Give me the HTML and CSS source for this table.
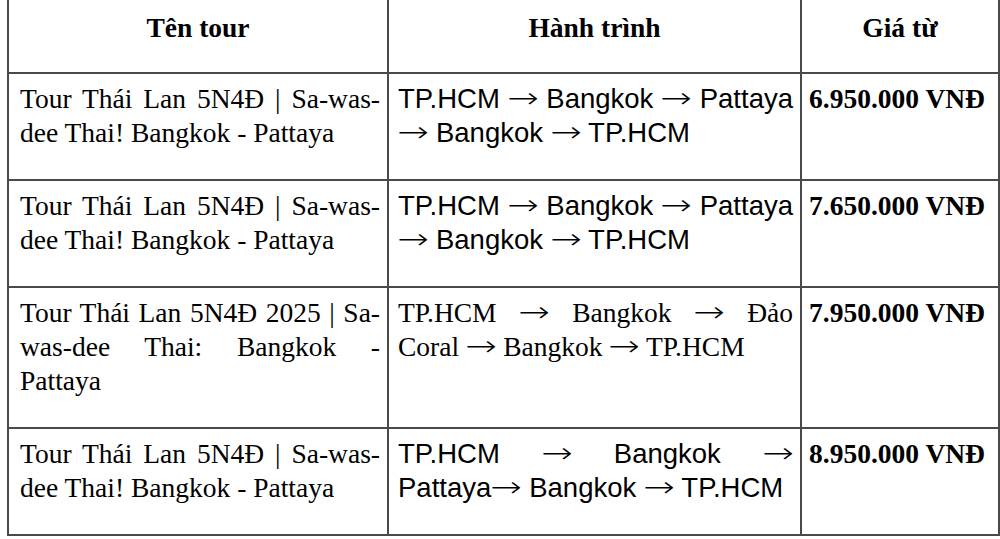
FILE: index.html
```html
<!DOCTYPE html>
<html lang="vi">
<head>
<meta charset="utf-8">
<title>Tour Thái Lan</title>
<link rel="stylesheet" href="styles.css">
</head>
<body>
<table class="tours">
  <colgroup>
    <col class="c-name">
    <col class="c-route">
    <col class="c-price">
  </colgroup>
  <thead>
    <tr>
      <th>Tên tour</th>
      <th>Hành trình</th>
      <th>Giá từ</th>
    </tr>
  </thead>
  <tbody>
    <tr>
      <td class="name"><span class="jl">Tour Thái Lan 5N4Đ | Sa-was-</span>dee Thai! Bangkok - Pattaya</td>
      <td class="route sans"><span class="jl">TP.HCM <span class="arr">→</span> Bangkok <span class="arr">→</span> Pattaya</span><span class="arr">→</span> Bangkok <span class="arr">→</span> TP.HCM</td>
      <td class="price">6.950.000 VNĐ</td>
    </tr>
    <tr>
      <td class="name"><span class="jl">Tour Thái Lan 5N4Đ | Sa-was-</span>dee Thai! Bangkok - Pattaya</td>
      <td class="route sans"><span class="jl">TP.HCM <span class="arr">→</span> Bangkok <span class="arr">→</span> Pattaya</span><span class="arr">→</span> Bangkok <span class="arr">→</span> TP.HCM</td>
      <td class="price">7.650.000 VNĐ</td>
    </tr>
    <tr>
      <td class="name"><span class="jl">Tour Thái Lan 5N4Đ 2025 | Sa-</span><span class="jl">was-dee Thai: Bangkok -</span>Pattaya</td>
      <td class="route"><span class="jl">TP.HCM <span class="arr">→</span> Bangkok <span class="arr">→</span> Đảo</span>Coral <span class="arr">→</span> Bangkok <span class="arr">→</span> TP.HCM</td>
      <td class="price">7.950.000 VNĐ</td>
    </tr>
    <tr>
      <td class="name"><span class="jl">Tour Thái Lan 5N4Đ | Sa-was-</span>dee Thai! Bangkok - Pattaya</td>
      <td class="route sans"><span class="jl">TP.HCM <span class="arr">→</span> Bangkok <span class="arr">→</span></span>Pattaya<span class="arr">→</span> Bangkok <span class="arr">→</span> TP.HCM</td>
      <td class="price">8.950.000 VNĐ</td>
    </tr>
  </tbody>
</table>
</body>
</html>
```

FILE: styles.css
```css
html, body {
  margin: 0;
  padding: 0;
  background: #ffffff;
}

body {
  font-family: "Liberation Serif", "Times New Roman", serif;
  color: #000000;
}

.tours {
  border-collapse: collapse;
  table-layout: fixed;
  width: 991px;
  margin: -2px 0 0 7px;
  border: 2px solid #1e1e1e;
}

.c-name { width: 380px; }
.c-route { width: 413px; }
.c-price { width: 198px; }

.tours th,
.tours td {
  border: 2px solid #4a4a4a;
  vertical-align: top;
  font-size: 27.5px;
  line-height: 34px;
}

.tours th {
  font-weight: bold;
  text-align: center;
  padding: 11px 7px 27px;
}

.tours td {
  padding: 8px 7px 29px 9px;
  text-align: justify;
}

.tours td.name {
  padding-left: 11px;
}

.tours td.sans {
  font-family: "Liberation Sans", Arial, sans-serif;
}

.tours td.price {
  font-weight: bold;
  text-align: left;
  padding-left: 7px;
  white-space: nowrap;
}

.jl {
  display: block;
  text-align: justify;
  text-align-last: justify;
}

.arr {
  display: inline-block;
  font-family: "DejaVu Sans", sans-serif;
  font-weight: 200;
  font-size: 29px;
  line-height: 29px;
  margin: 0 3px;
  transform: scaleX(1.3);
}
```
